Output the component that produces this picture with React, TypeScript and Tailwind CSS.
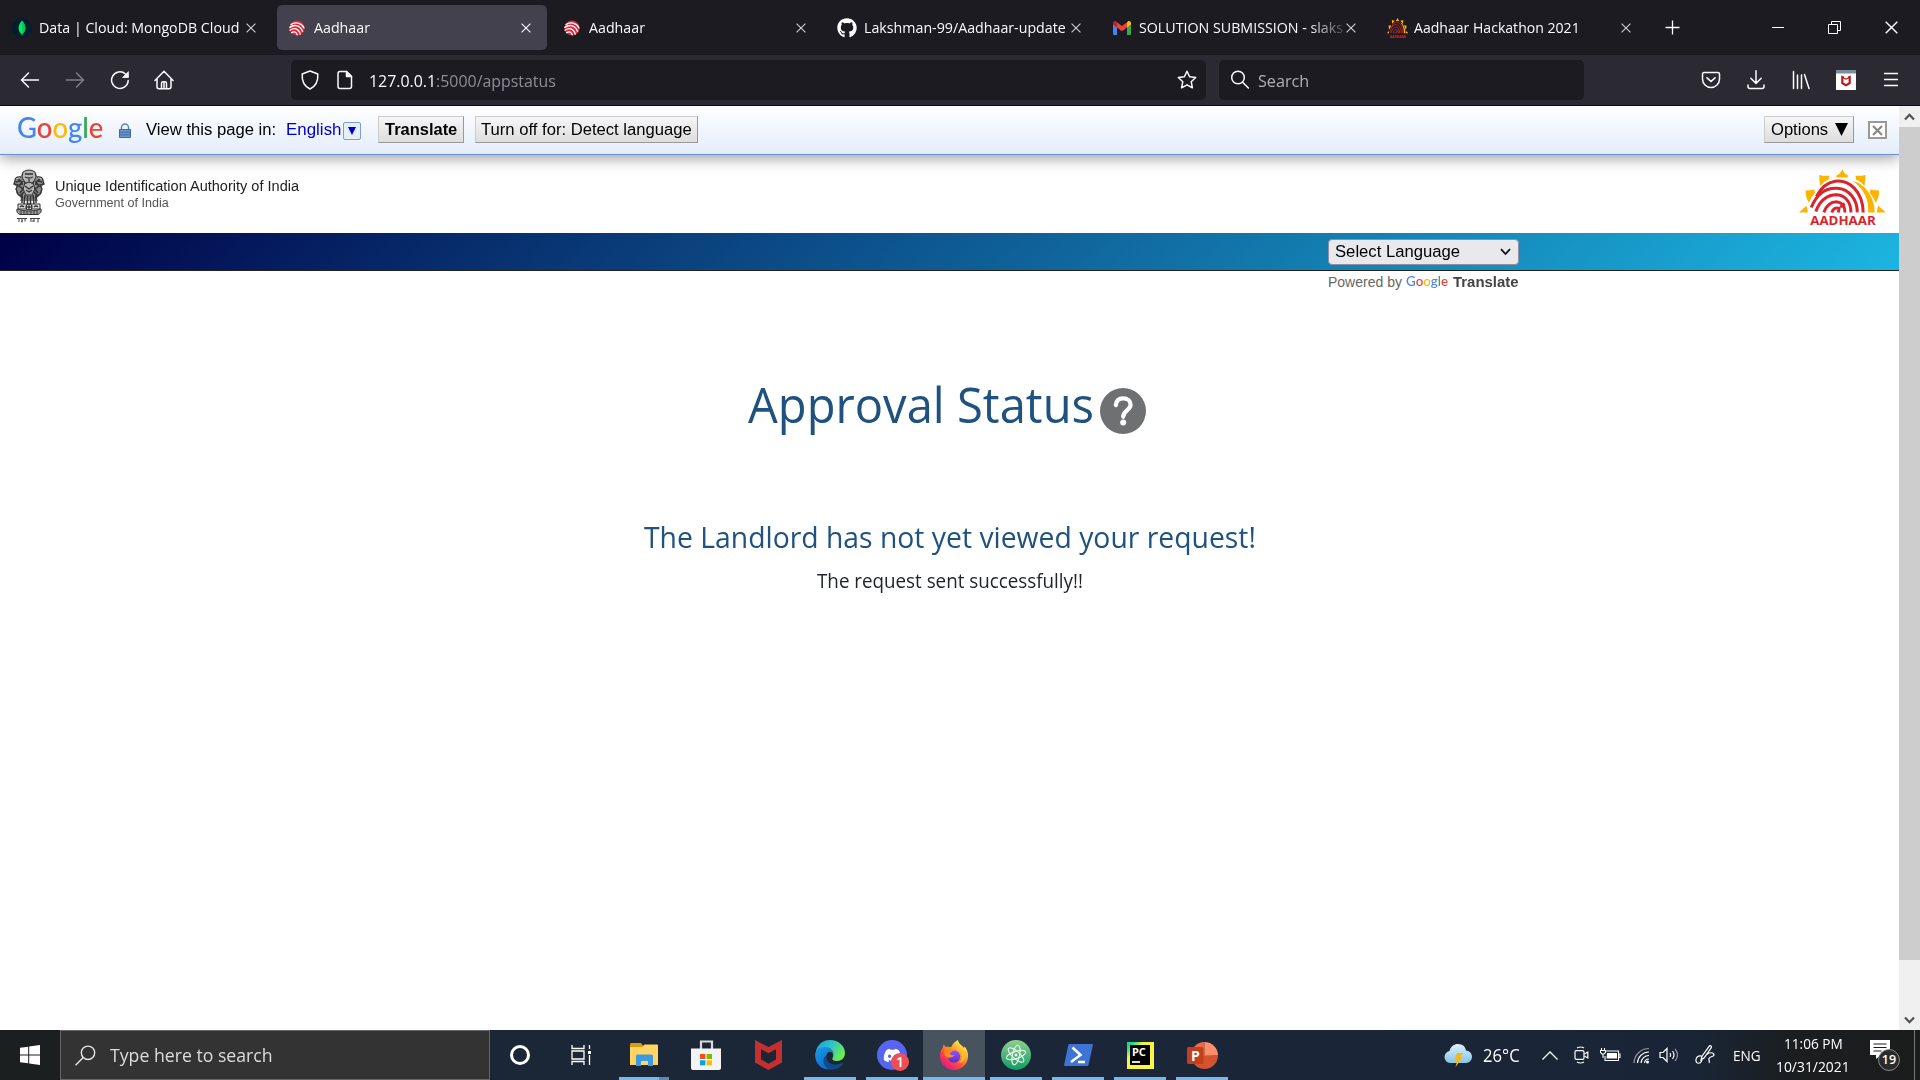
import { useLayoutEffect, useRef, useState, type ReactNode } from "react";
import { FaDiscord, FaGithub } from "react-icons/fa";

const UI = "font-['Open_Sans','Noto_Sans',sans-serif]";
const ARIAL = "font-['Liberation_Sans',Arial,sans-serif]";

/** Single line of text condensed or stretched to an exact width. */
function Fit({ w, className = "", children }: { w: number; className?: string; children: ReactNode }) {
  const ref = useRef<HTMLSpanElement>(null);
  const [scale, setScale] = useState(1);
  useLayoutEffect(() => {
    if (ref.current) setScale(w / ref.current.offsetWidth);
  }, [w]);
  return (
    <span className={`inline-block shrink-0 whitespace-nowrap text-left ${className}`} style={{ width: w }}>
      <span ref={ref} className="inline-block origin-left" style={{ transform: `scaleX(${scale})` }}>
        {children}
      </span>
    </span>
  );
}

const CloseX = ({ size = 11, color = "#fbfbfe" }: { size?: number; color?: string }) => (
  <svg width={size} height={size} viewBox="0 0 11 11" stroke={color} strokeWidth="1.2" fill="none">
    <path d="M.6 .6 10.4 10.4M10.4 .6 .6 10.4" />
  </svg>
);

const MongoIcon = () => (
  <svg width="20" height="20" viewBox="0 0 20 20">
    <circle cx="10" cy="10" r="10" fill="#001e2b" />
    <path d="M10 2.6C8 5.2 6.6 7.2 6.6 10.2c0 2.6 1.400 4.500 2.900 5.600L9.800 17.500h.5l.2-1.700c1.500-1.100 2.900-3 2.900-5.600C13.400 7.200 12 5.200 10 2.600Z" fill="#00ed64" />
    <path d="M10 2.600v14.900h.3l.2-1.700c1.500-1.100 2.900-3 2.900-5.600 0-3-1.400-5-3.400-7.600Z" fill="#00c853" />
  </svg>
);

const PrintIcon = () => (
  <svg width="20" height="20" viewBox="0 0 20 20" fill="none">
    <circle cx="10" cy="10" r="7.600" fill="#d9283a" />
    <g stroke="#fff" strokeWidth="1.300" strokeLinecap="round">
      <path d="M4 6.600C8 3.600 14.500 4.800 17 10" />
      <path d="M2.800 9.400C7.500 6 13.500 7.200 15.600 13.600" />
      <path d="M3 12.200c4-2.800 8.600-1.800 10.200 4" />
      <path d="M4.600 14.600c2.600-1.400 4.800-.6 5.600 2.200" />
    </g>
  </svg>
);

const GmailIcon = () => (
  <svg width="20" height="20" viewBox="0 0 20 20">
    <path d="M1 5.500v10.200c0 .7.500 1.300 1.300 1.300H5V9.200L1 6Z" fill="#4285f4" />
    <path d="M19 5.500v10.200c0 .7-.6 1.300-1.300 1.300H15V9.200L19 6Z" fill="#34a853" />
    <path d="M15 4.600v4.800l4-3V5c0-1.800-2-2.700-3.300-1.600Z" fill="#fbbc04" />
    <path d="M5 9.400V4.300l5 3.800 5-3.800v5.100l-5 3.800Z" fill="#ea4335" />
    <path d="M1 5v1.400l4 3V4.300l-.7-.9C3 2.300 1 3.200 1 5Z" fill="#c5221f" />
  </svg>
);

function AadhaarLogo({ width, height, dark = false }: { width: number; height: number; dark?: boolean }) {
  return (
    <svg width={width} height={height} viewBox="27 26 260 172" preserveAspectRatio="none" fill="none">
      <g fill="#fcb400">
        <path d="M139 46Q153 41 158 27q5 14 18 19-4 4-2 6h-33Z" />
        <path d="M88 44q17 4 31 2-4 6-1 11-16 6-27 20-3-17-3-33Z" />
        <path d="M228 44q-17 4-31 2 4 6 1 11 16 6 27 20 3-17 3-33Z" />
        <path d="M47 91q13 0 28-3-3 5 1 9-12 13-19 31-11-18-10-37Z" />
        <path d="M269 91q-13 0-28-3 3 5-1 9 12 13 19 31 11-18 10-37Z" />
        <path d="M27 157q11-11 23-20l4 20Z" />
        <path d="M289 157q-11-11-23-20l-4 20Z" />
        <path d="M190 62q26 4 46 33 19 28 20 62h-20q4-58-46-95Z" />
      </g>
      <g stroke="#d8252b" strokeWidth={dark ? 8 : 9}>
        <path d="M80 108Q102 68 136 63c44-6 84 32 85 94" />
        <path d="M64 142C82 98 108 82 142 84c38 2 62 36 61 73" />
        <path d="M78 154c12-32 34-50 63-50 29 2 43 25 43 53" />
        <path d="M102 157c8-20 20-32 38-32 18 2 26 14 26 32" />
        <path d="M126 157c4-12 14-16 22-12l-2 12M165 130q-8 4-12 12" />
      </g>
      <text x="61" y="195" textLength="198" lengthAdjust="spacingAndGlyphs" fill="#d8252b" fontFamily="Open Sans" fontWeight="700" fontSize="35">
        AADHAAR
      </text>
    </svg>
  );
}

type TabData = { icon: ReactNode; title: string; w: number; active?: boolean; fade?: boolean };
const tabs: TabData[] = [
  { icon: <MongoIcon />, title: "Data | Cloud: MongoDB Cloud", w: 200 },
  { icon: <PrintIcon />, title: "Aadhaar", w: 56, active: true },
  { icon: <PrintIcon />, title: "Aadhaar", w: 56 },
  { icon: <FaGithub size={20} color="#fff" />, title: "Lakshman-99/Aadhaar-update", w: 202 },
  { icon: <GmailIcon />, title: "SOLUTION SUBMISSION - slaks", w: 204, fade: true },
  { icon: <AadhaarLogo width={21} height={20} dark />, title: "Aadhaar Hackathon 2021", w: 166 },
];

function TabBar() {
  return (
    <div className="flex h-[55px] items-center bg-[#1c1b22] pl-[2px] text-[15px] text-[#fbfbfe]">
      <div className="flex gap-[5px]">
        {tabs.map((t, i) => (
          <div key={i} className={`flex h-[45px] w-[270px] items-center rounded-[5px] pl-[10px] ${t.active ? "bg-[#42414d]" : ""}`}>
            <span className="flex w-[21px] shrink-0 items-center">{t.icon}</span>
            <div className={`ml-[6px] w-[207px] overflow-hidden ${t.fade ? "[mask-image:linear-gradient(to_right,#000_170px,transparent_212px)]" : ""}`}>
              <Fit w={t.w} className="leading-[22px]">{t.title}</Fit>
            </div>
            <CloseX size={10} color={t.active ? "#fbfbfe" : "#cfcfd8"} />
          </div>
        ))}
      </div>
      <svg className="ml-[18px]" width="15" height="15" viewBox="0 0 15 15" stroke="#fbfbfe" strokeWidth="1.300">
        <path d="M7.500 .5v14M.5 7.500h14" />
      </svg>
      <div className="ml-auto flex">
        <div className="flex w-[57px] items-center justify-center"><span className="h-px w-[12px] bg-white" /></div>
        <div className="flex w-[57px] items-center justify-center">
          <svg width="13" height="13" viewBox="0 0 13 13" fill="none" stroke="#fff">
            <path d="M.5 3.500h9v9h-9ZM3.500 3.500v-3h9v9h-3" />
          </svg>
        </div>
        <div className="flex w-[57px] items-center justify-center"><CloseX size={13} color="#fff" /></div>
      </div>
    </div>
  );
}

function ToolIcon({ children, w = 45, dim = false }: { children: ReactNode; w?: number; dim?: boolean }) {
  return (
    <span className={`flex shrink-0 justify-center ${dim ? "opacity-40" : ""}`} style={{ width: w }}>
      <svg width="20" height="20" viewBox="0 0 20 20" fill="none" stroke="#fbfbfe" strokeWidth="1.500" strokeLinecap="round" strokeLinejoin="round">
        {children}
      </svg>
    </span>
  );
}

function ToolBar() {
  return (
    <div className="flex h-[50px] items-center bg-[#2b2a33] pl-[7px]">
      <ToolIcon><path d="M18.500 10H1.600M8.500 3 1.500 10l7 7" /></ToolIcon>
      <ToolIcon dim><path d="M1.500 10h16.900M11.500 3l7 7-7 7" /></ToolIcon>
      <ToolIcon>
        <path d="M18.200 10.500A8.300 8.300 0 1 1 15.500 4" />
        <path d="M18.400 2v5.500h-5.500Z" fill="#fbfbfe" strokeWidth=".8" />
      </ToolIcon>
      <ToolIcon w={44}>
        <path d="M1 10.500 10 1.300l9 9.200M3 9v7.800c0 1 .8 1.900 1.900 1.900h10.200c1.100 0 1.900-.9 1.900-1.900V9" />
        <path d="M7.500 18.500v-5c0-1 .7-1.700 1.700-1.700h1.600c1 0 1.700.7 1.700 1.700v5M10 13v5" />
      </ToolIcon>
      <div className="ml-[105px] flex h-[40px] w-[915px] items-center rounded-[5px] bg-[#1c1b22] pl-[1px]">
        <ToolIcon w={36}><path d="M10 1 17.800 4c.4 6-1.600 12-7.800 15C3.800 16 1.800 10 2.200 4Z" /></ToolIcon>
        <ToolIcon w={34}>
          <path d="M5 1.500h6.500l5 5v10c0 1.100-.9 2-2 2H5a2 2 0 0 1-2-2v-13c0-1.100.9-2 2-2Z" />
          <path d="M11.500 1.500v5h5Z" fill="#fbfbfe" />
        </ToolIcon>
        <Fit w={187} className="ml-[7px] mt-px text-[16.500px] leading-[24px] text-[#8f8e98]">
          <span className="text-[#fbfbfe]">127.0.0.1</span>:5000/appstatus
        </Fit>
        <span className="ml-auto mr-[1px]">
          <ToolIcon w={36}><path d="m10 1.200 2.600 5.600 6.100.7-4.500 4.200 1.200 6.100-5.400-3-5.400 3 1.200-6.100L1.300 7.500l6.100-.7Z" /></ToolIcon>
        </span>
      </div>
      <div className="ml-[13px] flex h-[40px] w-[365px] items-center rounded-[5px] bg-[#1c1b22] pl-[3px]">
        <ToolIcon w={36}><circle cx="8" cy="7.500" r="6.300" /><path d="m12.600 12.200 5.800 5.800" /></ToolIcon>
        <Fit w={51} className="mt-px text-[16.500px] leading-[24px] text-[#b0afb8]">Search</Fit>
      </div>
      <div className="ml-auto flex pr-[7px]">
        <ToolIcon>
          <path d="M3.200 2.500h13.600c1 0 1.700.7 1.700 1.700v4.800a8.500 8.500 0 0 1-17 0V4.200c0-1 .7-1.700 1.700-1.700Z" />
          <path d="m6 7.800 4 3.700 4-3.700" strokeWidth="1.700" />
        </ToolIcon>
        <ToolIcon><path d="M10 .8v12.400M4.800 8.200l5.200 5.200 5.200-5.200M2 15v1.500c0 1.100.8 2 2 2h12c1.200 0 2-.9 2-2V15" /></ToolIcon>
        <ToolIcon><path d="M2.500 1.500v17M6.500 5v13.500M10.500 5v13.500M13.500 4.500l4.500 14" /></ToolIcon>
        <span className="flex w-[45px] justify-center">
          <svg width="20" height="20" viewBox="0 0 20 20">
            <path d="M0 0h20v20H0Z" fill="#fff" />
            <path d="M0 0h20v3.500H0Z" fill="#78909c" />
            <path d="M5.200 5.500 8 6.600v.9l2 .9 2-.9v-.9l2.800-1.100v8.300L10 16.500l-4.800-2.700ZM7.400 8.600v4l2.600 1.400 2.600-1.400v-4l-2.600 1.200Z" fill="#c01818" fillRule="evenodd" />
          </svg>
        </span>
        <ToolIcon><path d="M3 3.500h14M3 9.500h14M3 15.500h14" strokeLinecap="butt" /></ToolIcon>
      </div>
    </div>
  );
}

function GoogleWord() {
  return (
    <>
      <span className="text-[#4285f4]">G</span>
      <span className="text-[#ea4335]">o</span>
      <span className="text-[#fbbc05]">o</span>
      <span className="text-[#4285f4]">g</span>
      <span className="text-[#34a853]">l</span>
      <span className="text-[#ea4335]">e</span>
    </>
  );
}

const barButton = "flex h-[27px] items-center justify-center border border-[#ccc] border-r-[#999] border-b-[#999] bg-linear-to-b from-[#f6f6f6] to-[#ddd]";

function TranslateBar() {
  return (
    <div className={`relative z-10 flex h-[49px] items-start border-b border-[#6b90da] bg-linear-to-b from-white to-[#e3edfa] text-[16px] leading-[20px] text-black shadow-[0_3px_14px_rgba(0,0,0,0.4)] ${ARIAL}`}>
      <Fit w={86} className="ml-[17px] mt-[5px] font-['Lato',sans-serif] text-[28px] font-medium leading-[32px]"><GoogleWord /></Fit>
      <svg className="ml-[16px] mt-[17px]" width="12" height="15" viewBox="0 0 12 15">
        <path d="M2.500 7V4.500a3.500 3.500 0 0 1 7 0V7" fill="none" stroke="#5b84bd" strokeWidth="1.500" />
        <path d="M.5 6.500h11v8H.5Z" fill="#6b98d0" stroke="#44699f" />
        <path d="M1 9.200h10M1 11.800h10" stroke="#44699f" />
      </svg>
      <Fit w={130} className="ml-[15px] mt-[14px]">View this page in:</Fit>
      <Fit w={55} className="ml-[10px] mt-[14px] text-[#0000cc] underline">English</Fit>
      <span className="ml-[2px] mt-[16px] flex h-[18px] w-[18px] items-center justify-center rounded-[2px] border border-[#7ba0d0] bg-[#e6effa]">
        <svg width="8" height="8" viewBox="0 0 8 8"><path d="M0 0h8L4 8Z" fill="#0000cc" /></svg>
      </span>
      <span className={`ml-[17px] mt-[10px] w-[86px] ${barButton}`}><Fit w={72} className="font-bold">Translate</Fit></span>
      <span className={`ml-[11px] mt-[10px] w-[223px] ${barButton}`}><Fit w={211}>Turn off for: Detect language</Fit></span>
      <span className={`ml-auto mt-[10px] w-[90px] gap-[7px] ${barButton}`}>
        <Fit w={57}>Options</Fit>
        <svg width="13" height="13" viewBox="0 0 13 13"><path d="M0 0h13L6.500 13Z" fill="#000" /></svg>
      </span>
      <span className="ml-[14px] mr-[12px] mt-[15px] flex h-[18px] w-[19px] items-center justify-center border-2 border-[#999] bg-white">
        <svg width="11" height="11" viewBox="0 0 11 11" stroke="#888" strokeWidth="2.200"><path d="m1 1 9 9M10 1l-9 9" /></svg>
      </span>
    </div>
  );
}

const Emblem = () => (
  <svg width="32" height="54" viewBox="0 0 32 54" fill="none" stroke="#333" strokeWidth="1">
    <g fill="#777">
      <path d="M9 4Q16-1 23 4l2 5 4 1 2 5-3 4 1 5-5 5 1 3H7l1-3-5-5 1-5-3-4 2-5 4-1Z" fill="#8a8a8a" stroke="none" />
    </g>
    <path d="M10 3q6-4 12 0l1 5-3 6 2 6-3 6h-6l-3-6 2-6-3-6Z" fill="#b5b5b5" />
    <path d="M12 5h8M12 8l3 1M20 8l-3 1M16 8v4M13 14l3-1 3 1M12 17l4 3 4-3M13 21l3 2 3-2M11 12l2 3M21 12l-2 3" strokeWidth="1.300" />
    <path d="M8 8Q2 7 2 12l-1 3 4 1-2 4 2 5 5 4M24 8q6-1 6 4l1 3-4 1 2 4-2 5-5 4" strokeWidth="1.400" />
    <path d="M5 10l4 3-3 4 4 3-3 4M27 10l-4 3 3 4-4 3 3 4M3 13l4-1M29 13l-4-1M7 27l4-4M25 27l-4-4M9 12v4M23 12v4" strokeWidth="1.500" />
    <path d="M9 25v9M12 26l-1 9M14.500 27v8M17.500 27v8M20 26l1 9M23 25v9" strokeWidth="1.500" />
    <path d="M5 35h22v5H5Z" fill="#ddd" />
    <circle cx="16" cy="38" r="3" fill="#fff" strokeWidth="1.200" />
    <path d="M16 35v6M13 38h6M7 38q2-2 4 0M21 38q2-2 4 0" strokeWidth="1.300" />
    <path d="M4 40q-1 4 3 5.500h18q4-1.500 3-5.500Q16 44 4 40Z" fill="#999" />
    <path d="M8 41v4M11 42v4M14 42v4M18 42v4M21 42v4M24 41v4" strokeWidth=".9" />
    <path d="M4 49.500h10M17 49.500h10M6 49.500v3.500M9 49.500v4M12 49.500v3M8 52h2M18 49.500v3.500M21 50v3M25 49.500v4M19 52h2" stroke="#444" />
  </svg>
);

function SiteHeader() {
  return (
    <>
      <header className={`flex h-[78px] items-start bg-white ${ARIAL}`}>
        <span className="ml-[13px] mt-[14px]"><Emblem /></span>
        <div className="ml-[10px] mt-[21px] flex flex-col">
          <Fit w={244} className="text-[14px] leading-[20px] text-[#222]">Unique Identification Authority of India</Fit>
          <Fit w={114} className="text-[12px] leading-[15px] text-[#555]">Government of India</Fit>
        </div>
        <span className="ml-auto mr-[14px] mt-[14px]"><AadhaarLogo width={86} height={57} /></span>
      </header>
      <nav className={`h-[38px] border-b border-[#222] bg-[linear-gradient(135deg,#000046,#1cb5e0)] ${ARIAL}`}>
        <div className="ml-[1328px] flex w-[191px] flex-col pt-[6px]">
          <div className="flex h-[26px] items-center justify-between rounded-[4px] border border-[#8f8f9d] bg-[#e9e9ed] pl-[6px] pr-[7px] text-[16px] leading-[20px] text-black">
            <Fit w={125}>Select Language</Fit>
            <svg width="11" height="8" viewBox="0 0 11 8" fill="none" stroke="#111" strokeWidth="1.800"><path d="m1 1.200 4.500 4.800L10 1.200" /></svg>
          </div>
          <div className="mt-[7px] flex h-[20px] items-center text-[14px] leading-[20px] text-[#666]">
            <Fit w={74}>Powered by</Fit>
            <Fit w={42} className="-mt-[3px] ml-[4px] font-['Lato',sans-serif] text-[14px] font-medium"><GoogleWord /></Fit>
            <Fit w={65} className="ml-[5px] font-bold text-[#444]">Translate</Fit>
          </div>
        </div>
      </nav>
    </>
  );
}

function Status() {
  return (
    <main className="flex flex-col items-center pt-[103px]">
      <div className="flex h-[60px] items-center pr-[5px] text-[#20527f]">
        <Fit w={346} className="text-[50px] leading-[60px]">Approval Status</Fit>
        <svg className="ml-[6px] mt-[14px]" width="46" height="46" viewBox="0 0 46 46" fill="none">
          <circle cx="23" cy="23" r="23" fill="#6e7072" />
          <path d="M15.800 17.200c.4-4.600 3.200-6.800 7.400-6.800 4.300 0 7.400 2.500 7.400 6.400 0 5.200-7.400 5.400-7.400 12" stroke="#fff" strokeWidth="4.200" strokeLinecap="round" />
          <circle cx="23.200" cy="34.500" r="3" fill="#fff" />
        </svg>
      </div>
      <Fit w={612} className="mt-[83px] text-[30px] leading-[40px] text-[#20527f]">The Landlord has not yet viewed your request!</Fit>
      <Fit w={266} className="mt-[9px] text-[19.500px] leading-[30px] text-[#212529]">The request sent successfully!!</Fit>
    </main>
  );
}

function Scrollbar() {
  return (
    <div className="flex w-[21px] shrink-0 flex-col bg-[#f0f0f0]">
      <div className="flex h-[21px] items-center justify-center">
        <svg width="11" height="8" viewBox="0 0 11 8" fill="none" stroke="#505050" strokeWidth="2.200"><path d="m1 6.500 4.500-4.700L10 6.500" /></svg>
      </div>
      <div className="h-[833px] bg-[#cdcdcd]" />
      <div className="mt-auto flex h-[21px] items-center justify-center">
        <svg width="11" height="8" viewBox="0 0 11 8" fill="none" stroke="#505050" strokeWidth="2.200"><path d="m1 1.500 4.500 4.700L10 1.500" /></svg>
      </div>
    </div>
  );
}

const ExplorerIcon = () => (
  <svg width="28" height="24" viewBox="0 0 28 24">
    <path d="M0 1.500C0 .7.600 0 1.500 0h9.500l2 2.500H14V7H0Z" fill="#d79b0d" />
    <path d="M0 4h12.500l2-2.500H27c.6 0 1 .4 1 1V22H0Z" fill="#ffd463" />
    <path d="M6 13c0-.8.700-1.500 1.500-1.500h14c.8 0 1.500.7 1.500 1.500v10h-5v-5h-7v5H6Z" fill="#3c9ae0" />
  </svg>
);
const StoreIcon = () => (
  <svg width="30" height="30" viewBox="0 0 30 30">
    <path d="M10 9V1.500h11V9" fill="none" stroke="#dcdcdc" strokeWidth="2.200" />
    <path d="M0 8.500h30V28c0 1-.8 2-2 2H2c-1.200 0-2-1-2-2Z" fill="#f3f3f3" />
    <path d="M9 14h5.400v5H9Z" fill="#f25022" /><path d="M15.600 14H21v5h-5.400Z" fill="#7fba00" />
    <path d="M9 20.300h5.400v5H9Z" fill="#00a4ef" /><path d="M15.600 20.300H21v5h-5.400Z" fill="#ffb900" />
  </svg>
);
const McafeeIcon = () => (
  <svg width="27" height="30" viewBox="0 0 27 30">
    <path d="M0 0 13.500 7 27 0v22.500L13.500 30 0 22.500Zm6 9.200v10.300l7.500 4.200 7.500-4.200V9.200l-7.500 4Z" fill="#c62f2f" fillRule="evenodd" />
  </svg>
);
const EdgeIcon = () => (
  <svg width="30" height="30" viewBox="0 0 30 30">
    <defs>
      <linearGradient id="eg1" x1="0" y1="0" x2="1" y2=".5"><stop offset="0" stopColor="#1c9fe0" /><stop offset=".5" stopColor="#2cc3c8" /><stop offset="1" stopColor="#6bea53" /></linearGradient>
      <linearGradient id="eg2" x1="0" y1="0" x2=".6" y2="1"><stop offset="0" stopColor="#1b9de2" /><stop offset="1" stopColor="#0a6acb" /></linearGradient>
    </defs>
    <path d="M1 11C2.500 4.500 8 0 15 0c8.600 0 15 6 15 13 0 5-3.500 8-8 8-3.600 0-5.500-1.500-4.300-3.200 2-3-.5-8.300-6.700-8.300C6 9.500 1 11 1 11Z" fill="url(#eg1)" />
    <path d="M.2 14C.5 10 4.500 7 10 7c5 0 8.500 3 9 7-1.200-2-3.500-2.500-5-2-5 2-3.500 13 4.500 16.500C8 32-.5 24 .2 14Z" fill="url(#eg2)" />
    <path d="M11.500 15.500c-1 7 6 12 15.500 7.500 1-.5 1.600.2 1 1C22 32.500 8 31.500 8.500 20c.2-2.500 1.500-4 3-4.500Z" fill="#114a8b" />
  </svg>
);
const DiscordIcon = () => (
  <span className="relative flex h-[30px] w-[30px] items-center justify-center rounded-full bg-[#5865f2]">
    <FaDiscord size={19} color="#fff" />
    <span className="absolute -bottom-[1px] -right-[2px] flex h-[18px] w-[18px] items-center justify-center rounded-full bg-[#ed4f55] text-[14px] font-semibold leading-none text-white">1</span>
  </span>
);
const FirefoxIcon = () => (
  <svg width="30" height="30" viewBox="0 0 30 30">
    <defs>
      <linearGradient id="ff1" x1=".85" y1=".1" x2=".2" y2=".95"><stop offset="0" stopColor="#fff44f" /><stop offset=".35" stopColor="#ffa126" /><stop offset=".65" stopColor="#ff4a3e" /><stop offset="1" stopColor="#e2128c" /></linearGradient>
      <linearGradient id="ff2" x1=".5" y1="0" x2=".4" y2="1"><stop offset="0" stopColor="#9059ff" /><stop offset="1" stopColor="#5b2bc9" /></linearGradient>
    </defs>
    <path d="M19 0c.5 4 4 5 6 8 .6-.8.5-2 .5-2 3 4 3.800 7.500 3.500 11-.7 7.500-6.500 13-14 13S1 24 1 16c0-4 1.500-7 3-9L4.500 4.500 7 7c2-.5 4-.2 5 .3C14 3 16.500 1 19 0Z" fill="url(#ff1)" />
    <circle cx="15" cy="16.500" r="6.200" fill="url(#ff2)" />
    <path d="M7 7c2.500 0 5 .5 5.500 2.200h3c-.3 2-3.800 2.600-4.600 4-.5 1.600 2.600 2.300 4.600 1.800C13 18.500 7 19 5.500 14 5 11 5.500 8.500 7 7Z" fill="#ff8a16" />
    <path d="M17 9c4 1 6 4 6 7.500 0 3-1.500 5-3 6 5 0 7-5 5.500-9C24 10 20 9 17 9Z" fill="#ffbd2e" />
  </svg>
);
const AtomIcon = () => (
  <svg width="30" height="30" viewBox="0 0 30 30" fill="none" stroke="#e6f6ea" strokeWidth="1.200">
    <defs><linearGradient id="at" x1="0" y1="0" x2="0" y2="1"><stop offset="0" stopColor="#8fd08d" /><stop offset="1" stopColor="#0e9c66" /></linearGradient></defs>
    <circle cx="15" cy="15" r="15" fill="url(#at)" stroke="none" />
    <ellipse cx="15" cy="15" rx="3.600" ry="10" transform="rotate(12 15 15)" />
    <ellipse cx="15" cy="15" rx="3.600" ry="10" transform="rotate(72 15 15)" />
    <ellipse cx="15" cy="15" rx="3.600" ry="10" transform="rotate(132 15 15)" />
    <circle cx="15" cy="15" r="1.500" fill="#e6f6ea" stroke="none" />
  </svg>
);
const PowerShellIcon = () => (
  <svg width="29" height="22" viewBox="0 0 29 22" fill="none">
    <path d="M5.500 0H28c.7 0 1 .5.900 1L24.500 21c-.2.600-.7 1-1.300 1H1C.3 22 0 21.500.1 21L4.300 1c.1-.6.600-1 1.200-1Z" fill="#3f74d4" />
    <path d="m8.500 3.500 8 7.500-9.500 7M14 18h7" stroke="#fff" strokeWidth="2.500" />
  </svg>
);
const PyCharmIcon = () => (
  <span className="flex h-[27px] w-[27px] items-center justify-center bg-[linear-gradient(135deg,#21d789_0%,#21d789_12%,#f3f53c_32%,#fcf84a_100%)]">
    <span className="flex h-[20px] w-[20px] flex-col bg-black pl-[2px] pt-[2px] font-['Noto_Sans',sans-serif] text-[11px] font-bold leading-[10px] text-white">
      <Fit w={14}>PC</Fit>
      <span className="mt-[4px] h-[2px] w-[8px] bg-[#ddd]" />
    </span>
  </span>
);
const PowerPointIcon = () => (
  <svg width="31" height="27" viewBox="0 0 31 27">
    <path d="M17.500 0A13.400 13.400 0 0 0 4 13.500l13.500.5Z" fill="#ed6c47" />
    <path d="M17.500 0A13.400 13.400 0 0 1 31 13.500L17.500 14Z" fill="#ff8f6b" />
    <path d="M4 13.500h27a13.500 13.500 0 0 1-27 0Z" fill="#d35230" />
    <path d="M1.500 5H15c.8 0 1.500.7 1.500 1.500v14c0 .8-.7 1.500-1.500 1.500H1.500C.7 22 0 21.300 0 20.500v-14C0 5.700.7 5 1.500 5Z" fill="#c43e1c" />
    <text x="4" y="18.500" fill="#fff" fontFamily="Open Sans" fontWeight="700" fontSize="14">P</text>
  </svg>
);

const apps: { icon: ReactNode; state: "multi" | "none" | "open" | "active" }[] = [
  { icon: <ExplorerIcon />, state: "multi" },
  { icon: <StoreIcon />, state: "none" },
  { icon: <McafeeIcon />, state: "none" },
  { icon: <EdgeIcon />, state: "open" },
  { icon: <DiscordIcon />, state: "open" },
  { icon: <FirefoxIcon />, state: "active" },
  { icon: <AtomIcon />, state: "open" },
  { icon: <PowerShellIcon />, state: "open" },
  { icon: <PyCharmIcon />, state: "open" },
  { icon: <PowerPointIcon />, state: "open" },
];

function Tray() {
  return (
    <div className="ml-auto flex h-full items-center text-white">
      <svg width="30" height="24" viewBox="0 0 30 24">
        <defs><linearGradient id="cl" x1="0" y1="0" x2="0" y2="1"><stop offset="0" stopColor="#dff1fb" /><stop offset="1" stopColor="#86c3ea" /></linearGradient></defs>
        <path d="M7 20a6 6 0 0 1-.5-11.900C7.500 3.500 11 1 15 1c4.500 0 7.500 2.800 8 6.500 3.700.3 6 3 6 6.200 0 3.500-2.800 6.300-6.500 6.300Z" fill="url(#cl)" />
        <path d="M14 10h6l-2.500 4H20L12.500 24l1.700-6.500H11Z" fill="#f9b811" />
      </svg>
      <Fit w={37} className="ml-[10px] text-[18px] leading-[24px]">26°C</Fit>
      <svg className="ml-[22px]" width="16" height="9" viewBox="0 0 16 9" fill="none" stroke="#fff" strokeWidth="1.300"><path d="m.5 8.500 7.500-7.500 7.500 7.500" /></svg>
      <svg className="ml-[16px]" width="15" height="18" viewBox="0 0 15 18" fill="none" stroke="#fff" strokeWidth="1.200">
        <rect x="1" y="4.600" width="9" height="8.800" rx="1.500" /><path d="m10.500 8 3.300-2v6l-3.300-2M3 2Q6.500 0 10 2M3 16q3.500 2 7 0" />
      </svg>
      <svg className="ml-[11px]" width="21" height="14" viewBox="0 0 21 14" fill="none" stroke="#fff" strokeWidth="1.100">
        <path d="M5 3h13.500v9.500H5V8M18.500 6H20v3.500h-1.500" /><path d="M7 5h10v5.500H6.500Z" fill="#fff" stroke="none" /><path d="M1.500 0v2.500M4.500 0v2.500M.5 2.500h5v2L4 6H2L.5 4.500ZM3 6v4" />
      </svg>
      <svg className="ml-[12px]" width="17" height="17" viewBox="0 0 17 17" fill="none" stroke="#fff" strokeWidth="1.200">
        <path d="M1 16A15 15 0 0 1 16 1.500" opacity=".5" /><path d="M4.500 16A11.500 11.500 0 0 1 16 5M8 16a8 8 0 0 1 8-7.500" /><path d="M11.500 16a4.500 4.500 0 0 1 4.500-4" /><circle cx="14.500" cy="15" r="1.500" fill="#fff" stroke="none" />
      </svg>
      <svg className="ml-[9px]" width="21" height="18" viewBox="0 0 21 18" fill="none" stroke="#fff" strokeWidth="1.200">
        <path d="M1 6.500h3l4-4v13l-4-4H1ZM11 7q1.500 2 0 4M13.500 5q3 4 0 8" /><path d="M16 3q5 6 0 12" opacity=".5" />
      </svg>
      <svg className="ml-[15px]" width="20" height="20" viewBox="0 0 20 20" fill="none" stroke="#fff" strokeWidth="1.200">
        <path d="M14.500.8c1.500-.5 2.500 1 1.500 2.300L9 13l-3 2 .8-3.500ZM6.500 11C3 10 .5 13 1 16c.5 3 4.500 3 5.500 0 .5-1.500 0-3 2.500-3M11 10c3-3 8-3 8 0 0 2-4 1-5 3.500-.5 1.500 1 3 0 4.500" />
      </svg>
      <Fit w={28} className="ml-[18px] text-[15px] leading-[20px]">ENG</Fit>
      <div className="ml-[11px] flex w-[82px] flex-col items-center text-[15px] leading-[23px]">
        <Fit w={59}>11:06 PM</Fit>
        <Fit w={74}>10/31/2021</Fit>
      </div>
      <span className="relative ml-[16px] mr-[11px] h-[30px] w-[33px]">
        <svg width="20" height="20" viewBox="0 0 20 20"><path d="M0 0h20v15h-9l-5 4v-4H0Z" fill="#fff" /><path d="M3.500 4h13M3.500 7.500h13M3.500 11h8" stroke="#1c1c1c" strokeWidth="1.200" /></svg>
        <span className="absolute left-[8px] top-[9px] flex h-[22px] w-[22px] items-center justify-center rounded-full border border-[#888] bg-[#2b2b2b] text-[12.500px] font-semibold leading-none">19</span>
      </span>
      <span className="mr-[5px] h-full w-px bg-[#777]" />
    </div>
  );
}

function Taskbar() {
  return (
    <footer className="flex h-[50px] items-center bg-[linear-gradient(to_right,#1b1f1f_0px,#1b1f1f_60px,#1b2636_489px,#1b2738_1000px,#192537_1690px,#1b1e20_1790px,#1b1c1c_1920px)]">
      <div className="flex w-[60px] justify-center">
        <svg width="20" height="20" viewBox="0 0 20 20" fill="#fff"><path d="M0 2.800 8.200 1.700v7.800H0ZM9.200 1.500 20 0v9.500H9.200ZM0 10.500h8.200v7.800L0 17.200ZM9.200 10.500H20V20L9.200 18.500Z" /></svg>
      </div>
      <div className="flex h-full w-[430px] items-center border border-[#666] bg-[#333] pl-[14px] text-[#dcdcdc]">
        <svg width="21" height="21" viewBox="0 0 21 21" fill="none" stroke="#e6e6e6" strokeWidth="1.400"><circle cx="13" cy="7.800" r="6.700" /><path d="M8.200 12.500.6 20.300" /></svg>
        <Fit w={163} className="ml-[14px] text-[18px] leading-[24px]">Type here to search</Fit>
      </div>
      <div className="flex w-[60px] justify-center"><span className="h-[20px] w-[20px] rounded-full border-[3px] border-white" /></div>
      <div className="flex w-[63px] justify-center">
        <svg width="21" height="20" viewBox="0 0 21 20" fill="none" stroke="#fff" strokeWidth="1.300">
          <path d="M1 0v3.500h12V0M1 6h12v8H1ZM1 20v-3.500h12V20M18.500 0v4M18.500 10v10" /><path d="M17 6h3v3h-3Z" fill="#fff" stroke="none" />
        </svg>
      </div>
      <div className="flex h-full">
        {apps.map((a, i) => (
          <div key={i} className={`relative flex h-full w-[62px] items-center justify-center ${a.state === "active" ? "bg-[#47535f]" : ""}`}>
            {a.icon}
            {a.state === "active" && <span className="absolute inset-x-0 bottom-0 h-[3px] bg-[#76b9ed]" />}
            {a.state === "open" && <span className="absolute inset-x-[5px] bottom-0 h-[3px] bg-[#76b9ed]" />}
            {a.state === "multi" && (
              <span className="absolute inset-x-[6px] bottom-0 flex h-[3px]"><span className="w-[40px] bg-[#76b9ed]" /><span className="flex-1 bg-[#5a8ab2]" /></span>
            )}
          </div>
        ))}
      </div>
      <Tray />
    </footer>
  );
}

export default function App() {
  return (
    <div className={`flex h-[1080px] w-[1920px] flex-col overflow-hidden bg-white ${UI}`}>
      <TabBar />
      <ToolBar />
      <div className="h-px bg-[#0c0c0d]" />
      <div className="flex h-[924px]">
        <div className="min-w-0 flex-1 overflow-hidden bg-white">
          <TranslateBar />
          <SiteHeader />
          <Status />
        </div>
        <Scrollbar />
      </div>
      <Taskbar />
    </div>
  );
}
